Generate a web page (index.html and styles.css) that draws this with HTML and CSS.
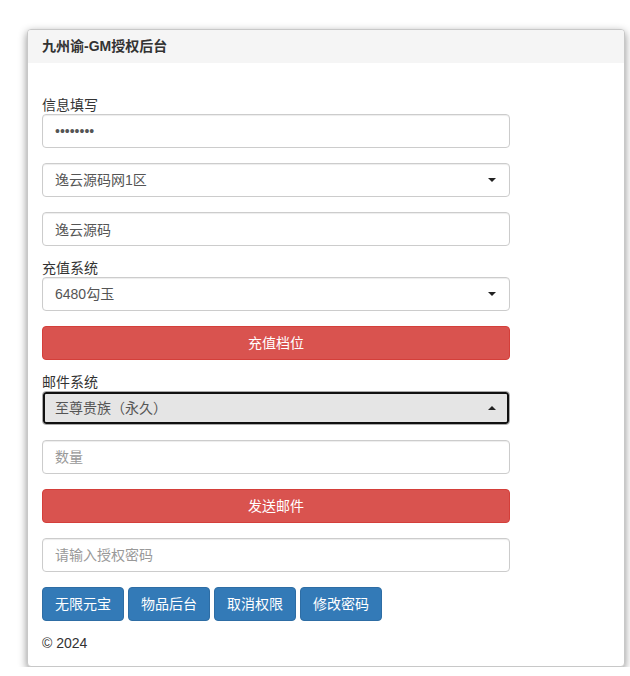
FILE: index.html
```html
<!DOCTYPE html>
<html lang="zh-CN">
<head>
<meta charset="utf-8">
<title>九州谕-GM授权后台</title>
<link rel="stylesheet" href="styles.css">
</head>
<body>
<div class="card">
  <div class="card-header">九州谕-GM授权后台</div>
  <div class="card-body">
    <form class="form">
      <label class="label">信息填写</label>
      <input class="control" type="password" value="12345678">
      <div class="select-wrap">
        <select class="control select"><option>逸云源码网1区</option></select>
        <svg class="caret" width="8" height="4" viewBox="0 0 8 4"><path d="M0 0H8L4 4Z" fill="#222"/></svg>
      </div>
      <input class="control" type="text" value="逸云源码">

      <label class="label">充值系统</label>
      <div class="select-wrap">
        <select class="control select"><option>6480勾玉</option></select>
        <svg class="caret" width="8" height="4" viewBox="0 0 8 4"><path d="M0 0H8L4 4Z" fill="#222"/></svg>
      </div>
      <button type="button" class="btn btn-danger">充值档位</button>

      <label class="label">邮件系统</label>
      <div class="select-wrap">
        <select class="control select focused"><option>至尊贵族（永久）</option></select>
        <svg class="caret" width="8" height="4" viewBox="0 0 8 4"><path d="M0 4H8L4 0Z" fill="#222"/></svg>
      </div>
      <input class="control" type="text" placeholder="数量">
      <button type="button" class="btn btn-danger">发送邮件</button>
      <input class="control" type="text" placeholder="请输入授权密码">

      <div class="actions">
        <button type="button" class="btn btn-primary">无限元宝</button>
        <button type="button" class="btn btn-primary">物品后台</button>
        <button type="button" class="btn btn-primary">取消权限</button>
        <button type="button" class="btn btn-primary">修改密码</button>
      </div>
    </form>
    <div class="footer">© 2024</div>
  </div>
</div>
</body>
</html>
```

FILE: styles.css
```css
* { box-sizing: border-box; }

html, body {
  margin: 0;
  padding: 0;
  background: #fff;
}

body {
  font-family: "Liberation Sans", "Noto Sans CJK SC", sans-serif;
  font-size: 14px;
  line-height: 20px;
  color: #333;
}

.card {
  margin: 29px 0 0 27px;
  width: 598px;
  border: 1px solid #c8c8c8;
  border-radius: 4px;
  background: #fff;
  box-shadow: 0 3px 8px rgba(0, 0, 0, 0.45);
  overflow: hidden;
}

.card-header {
  background: #f5f5f5;
  padding: 6px 14px 7px;
  font-weight: bold;
  font-size: 14px;
  line-height: 20px;
  color: #333;
}

.card-body {
  padding: 35px 14px 13px;
}

.form {
  width: 468px;
  display: flex;
  flex-direction: column;
}

.label {
  display: block;
  line-height: 17px;
  margin-top: -1px;
  color: #333;
}

.control {
  display: block;
  width: 100%;
  height: 34px;
  margin: 0 0 15px;
  padding: 6px 12px;
  font-family: inherit;
  font-size: 14px;
  line-height: 20px;
  color: #555;
  background: #fff;
  border: 1px solid #ccc;
  border-radius: 4px;
  box-shadow: inset 0 1px 1px rgba(0, 0, 0, 0.075);
  outline: none;
}

.control::placeholder {
  color: #999;
}

.select-wrap {
  position: relative;
}

.select {
  appearance: none;
  -webkit-appearance: none;
  padding-right: 28px;
}

.select.focused {
  background: #e5e5e5;
  border-color: #aaa;
  box-shadow: inset 0 0 0 2px #111;
}

.caret {
  position: absolute;
  right: 14px;
  top: 15px;
  pointer-events: none;
}

.btn {
  display: block;
  height: 34px;
  padding: 6px 12px;
  margin: 0 0 15px;
  font-family: inherit;
  font-size: 14px;
  line-height: 20px;
  color: #fff;
  border: 1px solid transparent;
  border-radius: 4px;
  cursor: pointer;
  text-align: center;
}

.btn-danger {
  width: 100%;
  background: #d9534f;
  border-color: #d43f3a;
}

.actions {
  display: flex;
  gap: 4px;
}

.btn-primary {
  width: 82px;
  margin: 0;
  background: #337ab7;
  border-color: #2e6da4;
}

.footer {
  margin-top: 12px;
  line-height: 20px;
  color: #333;
}
```
